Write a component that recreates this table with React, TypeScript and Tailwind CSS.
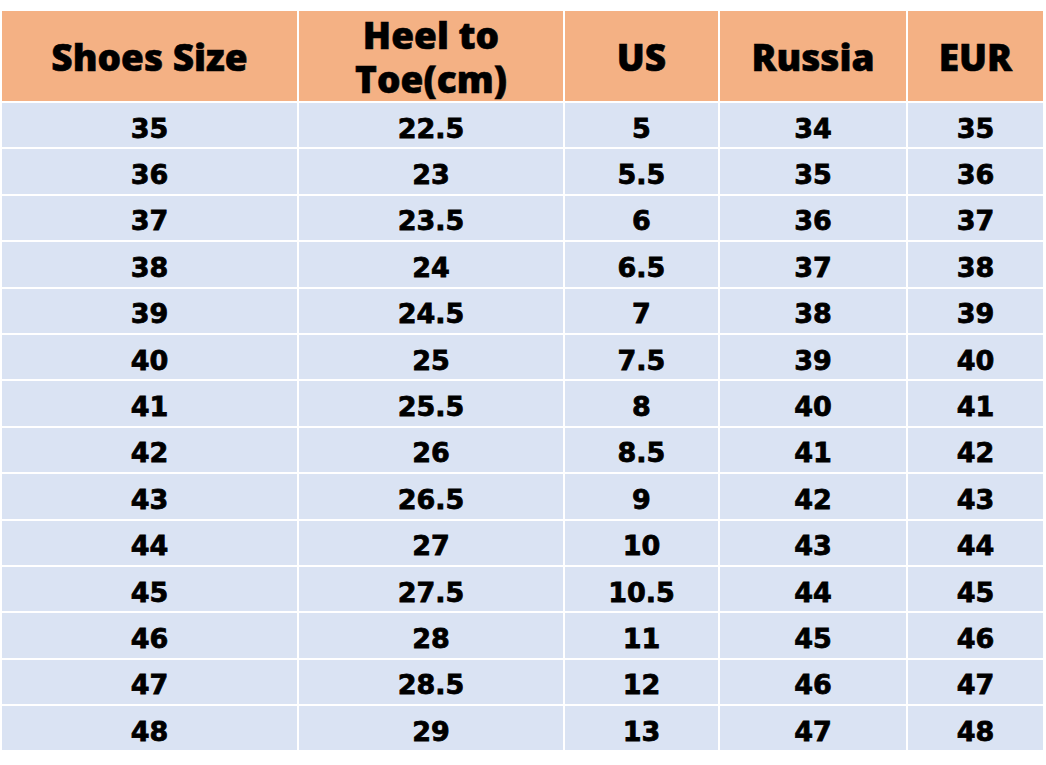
const headers = ['Shoes Size', 'Heel to Toe(cm)', 'US', 'Russia', 'EUR']

const rows: [number, string, string, number, number][] = [
  [35, '22.5', '5', 34, 35],
  [36, '23', '5.5', 35, 36],
  [37, '23.5', '6', 36, 37],
  [38, '24', '6.5', 37, 38],
  [39, '24.5', '7', 38, 39],
  [40, '25', '7.5', 39, 40],
  [41, '25.5', '8', 40, 41],
  [42, '26', '8.5', 41, 42],
  [43, '26.5', '9', 42, 43],
  [44, '27', '10', 43, 44],
  [45, '27.5', '10.5', 44, 45],
  [46, '28', '11', 45, 46],
  [47, '28.5', '12', 46, 47],
  [48, '29', '13', 47, 48],
]

export default function App() {
  return (
    <div className="w-[1046px] h-[765px] bg-white pt-[11px] pl-[2px] overflow-hidden">
      <div className="grid grid-cols-[295px_264px_153px_186px_135px] grid-rows-[90px_repeat(14,44.4px)] gap-[2px] w-[1041px] bg-white">
        {/* header */}
        {headers.map((h) => (
          <div
            key={h}
            className="bg-[#f4b184] flex items-center justify-center text-center text-black font-extrabold text-[37px] leading-[44px] pt-[2px] [-webkit-text-stroke:0.6px_black] font-['Open_Sans',sans-serif]"
          >
            {h === 'Heel to Toe(cm)' ? (
              <span>
                Heel to
                <br />
                Toe(cm)
              </span>
            ) : (
              h
            )}
          </div>
        ))}
        {/* body */}
        {rows.map((r) =>
          r.map((cell, i) => (
            <div
              key={`${r[0]}-${i}`}
              className="bg-[#dae3f3] flex items-center justify-center pt-[6px] leading-none text-black font-bold text-[27px] [-webkit-text-stroke:0.8px_black] font-['DejaVu_Sans',sans-serif]"
            >
              {cell}
            </div>
          )),
        )}
      </div>
    </div>
  )
}
